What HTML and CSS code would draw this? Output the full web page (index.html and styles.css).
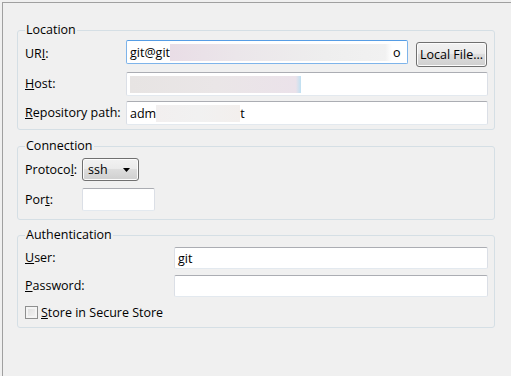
FILE: index.html
```html
<!DOCTYPE html>
<html lang="en">
<head>
  <meta charset="UTF-8">
  <title>Source Git Repository</title>
  <link rel="stylesheet" href="styles.css">
</head>
<body>
  <div class="frame">
    <fieldset class="group location">
      <legend>Location</legend>
      <label class="lbl">UR<u>I</u>:</label>
      <div class="field uri-field focused">
        <span class="txt">git@git</span><span class="blur blur-uri"></span><span class="txt">o</span>
      </div>
      <button class="btn">Local File...</button>
      <label class="lbl"><u>H</u>ost:</label>
      <div class="field wide"><span class="blur blur-host"></span></div>
      <label class="lbl"><u>R</u>epository path:</label>
      <div class="field wide">
        <span class="txt">adm</span><span class="blur blur-repo"></span><span class="txt">t</span>
      </div>
    </fieldset>

    <fieldset class="group connection">
      <legend>Connection</legend>
      <label class="lbl">Protoco<u>l</u>:</label>
      <div class="combo">
        <span>ssh</span>
        <svg width="7" height="4" viewBox="0 0 7 4"><path d="M0 0h7L3.5 4z" fill="#000"/></svg>
      </div>
      <label class="lbl">Por<u>t</u>:</label>
      <div class="field port"></div>
    </fieldset>

    <fieldset class="group auth">
      <legend>Authentication</legend>
      <label class="lbl"><u>U</u>ser:</label>
      <div class="field"><span class="txt">git</span></div>
      <label class="lbl"><u>P</u>assword:</label>
      <div class="field"></div>
      <label class="check"><span class="box"></span><span><u>S</u>tore in Secure Store</span></label>
    </fieldset>
  </div>
</body>
</html>
```

FILE: styles.css
```css
* {
  box-sizing: border-box;
}

body {
  margin: 0;
  padding: 2px 0 0 2px;
  background: #f0f0f0;
  font-family: "Open Sans", "Noto Sans", sans-serif;
  font-size: 12.5px;
  color: #000;
  overflow: hidden;
}

.frame {
  height: 374px;
  border-top: 1px solid #a0a0a0;
  border-left: 1px solid #a0a0a0;
  padding: 20px 14px 0 14px;
}

.group {
  width: 478px;
  margin: 0;
  border: 1px solid #d5dfe5;
  border-radius: 3px;
  padding: 3px 6px 4px 7px;
  display: grid;
  align-items: center;
  row-gap: 5px;
}

legend {
  padding: 0 1px;
  margin-left: 0;
  line-height: 14px;
}

.lbl {
  line-height: 16px;
}

.field {
  height: 24px;
  background: #fff;
  border: 1px solid #dbdfe6;
  border-top-color: #abadb3;
  border-bottom-color: #e3e9ef;
  border-radius: 2px;
  display: flex;
  align-items: center;
  padding: 0 3px;
  overflow: hidden;
}

.field.focused {
  border-color: #7eb4ea;
  border-top-color: #569de5;
}

.txt {
  white-space: nowrap;
}

.blur {
  display: block;
  height: 17px;
}

.blur-uri {
  width: 222px;
  background: linear-gradient(90deg, #e9dde6, #ebe6ea 30%, #eeeeee 70%, #f1f1f1 97%, #fff);
  margin-right: 1px;
}

.blur-host {
  width: 171px;
  background: linear-gradient(90deg, #e7e4e3, #eae6e7 50%, #ebe2ea 97%, #bfe0f2);
}

.blur-repo {
  width: 84px;
  background: linear-gradient(90deg, #f2efef, #f1f1f1 50%, #f3efed);
}

/* Location */
.location {
  grid-template-columns: 101px 282px 8px 72px;
  grid-template-rows: 27px 24px 24px;
  row-gap: 5px;
}

.location .lbl {
  grid-column: 1;
}

.location .uri-field {
  grid-column: 2;
  align-self: start;
}

.location .btn {
  grid-column: 4;
  align-self: end;
}

.location .wide {
  grid-column: 2 / 5;
}

.btn {
  height: 25px;
  width: 71px;
  font: inherit;
  color: #000;
  padding: 0;
  border: 1px solid #707070;
  border-radius: 3px;
  background: linear-gradient(#f2f2f2, #ebebeb 45%, #dddddd 50%, #cfcfcf);
  box-shadow: inset 0 0 0 1px #fcfcfc;
}

/* Connection */
.connection {
  margin-top: 9px;
  grid-template-columns: 57px 73px 1fr;
  grid-template-rows: 23px 23px;
  row-gap: 7px;
  padding-top: 5px;
  padding-bottom: 8px;
}

.connection .lbl {
  grid-column: 1;
}

.combo {
  grid-column: 2;
  width: 57px;
  height: 23px;
  border: 1px solid #707070;
  border-radius: 3px;
  background: linear-gradient(#f2f2f2, #ebebeb 45%, #dddddd 50%, #cfcfcf);
  box-shadow: inset 0 0 0 1px #fcfcfc;
  display: flex;
  align-items: center;
  justify-content: space-between;
  padding: 0 8px 0 5px;
}

.port {
  grid-column: 2;
  width: 73px;
  height: 23px;
}

/* Authentication */
.auth {
  margin-top: 8px;
  grid-template-columns: 149px 314px;
  grid-template-rows: 22px 22px 20px;
  row-gap: 6px;
  padding-top: 5px;
  padding-bottom: 4px;
}

.auth .field {
  height: 22px;
}

.check {
  grid-column: 1 / 3;
  margin-top: -2px;
  display: flex;
  align-items: center;
  gap: 3px;
}

.box {
  width: 13px;
  height: 13px;
  border: 1px solid #8e8f8f;
  background: linear-gradient(135deg, #dcdcdc, #f6f6f6);
  box-shadow: inset 0 0 0 2px #f4f4f4;
}
```
